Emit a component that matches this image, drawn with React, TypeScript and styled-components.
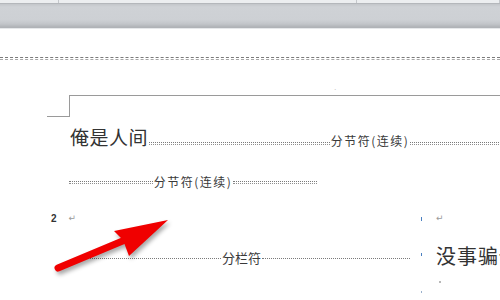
import * as React from 'react';
import styled, { createGlobalStyle } from 'styled-components';

const GlobalStyle = createGlobalStyle`
  html, body {
    margin: 0;
    padding: 0;
    background: #ffffff;
  }
  body {
    width: 500px;
    height: 300px;
    overflow: hidden;
    font-family: "Noto Sans CJK SC", "Liberation Sans", sans-serif;
  }
`;

const Screen = styled.div`
  position: relative;
  width: 500px;
  height: 300px;
  overflow: hidden;
  background: #ffffff;
`;

const TopStrip = styled.div`
  display: flex;
  height: 3px;
  background: #eceef0;
  border-bottom: 1px solid #b4b7bb;
`;

const StripCell = styled.div<{ width?: number }>`
  flex: ${p => (p.width ? `0 0 ${p.width}px` : '1')};
  border-right: 1px solid #c4c7cb;
`;

const Ribbon = styled.div`
  height: 24px;
  background: linear-gradient(
    180deg,
    #c3c6ca 0px,
    #cfd2d6 3px,
    #cdd0d4 16px,
    #c2c5c9 20px,
    #b0b3b7 23px
  );
  border-bottom: 1px solid #e6e8ea;
`;

const Page = styled.div`
  display: flex;
  flex-direction: column;
`;

const HeaderRule = styled.div`
  margin-top: 28px;
  height: 1px;
  border-top: 1px dashed #7a7a7a;
  border-bottom: 1px dashed #a8a8a8;
`;

const CornerRow = styled.div`
  display: flex;
  margin-top: 35px;
  margin-left: 47px;
  height: 22px;
`;

const CornerStub = styled.div`
  flex: 0 0 22px;
  border-bottom: 1px solid #9a9a9a;
`;

const CornerEdge = styled.div`
  flex: 1;
  border-top: 1px solid #9a9a9a;
  border-left: 1px solid #9a9a9a;
  position: relative;
`;

const Tick = styled.span`
  position: absolute;
  left: 264px;
  top: -8px;
  font-size: 7px;
  color: #a0a0a0;
  font-family: "Liberation Sans", sans-serif;
`;

const BreakLine = styled.div<{ indent: number; top: number; end: number; bottom?: boolean }>`
  display: flex;
  align-items: ${p => (p.bottom ? 'flex-end' : 'center')};
  flex: none;
  margin-top: ${p => p.top}px;
  padding-left: ${p => p.indent}px;
  width: ${p => p.end - p.indent}px;
  white-space: nowrap;
`;

const BigText = styled.span`
  font-size: 19px;
  line-height: 24px;
  color: #333333;
  letter-spacing: 0.5px;
`;

const Fill = styled.span<{ single?: boolean; lift?: number }>`
  flex: 1;
  height: ${p => (p.single ? '0' : '1px')};
  border-top: 1px dotted #7a7a7a;
  border-bottom: ${p => (p.single ? 'none' : '1px dotted #8f8f8f')};
  margin: 0 1px ${p => p.lift || 0}px;
  align-self: ${p => (p.lift ? 'flex-end' : 'center')};
`;

const BreakLabel = styled.span<{ size?: number; spacing?: number }>`
  font-size: ${p => p.size || 12}px;
  letter-spacing: ${p => p.spacing ?? 1.5}px;
  line-height: 16px;
  color: #3a3a3a;
`;

const Columns = styled.div`
  display: grid;
  grid-template-columns: 420px 14px 1fr;
  margin-top: 21px;
`;

const LeftCol = styled.div`
  display: flex;
  flex-direction: column;
  padding-left: 51px;
  padding-right: 9px;
`;

const MarkRow = styled.div`
  display: flex;
  align-items: center;
  gap: 12px;
  height: 14px;
`;

const LineNum = styled.span`
  font-family: "Liberation Sans", sans-serif;
  font-size: 10px;
  font-weight: bold;
  color: #333;
`;

const Return = styled.span`
  font-family: "DejaVu Sans", sans-serif;
  font-size: 9px;
  color: #9a9a9a;
`;

const ColBreak = styled.div`
  display: flex;
  align-items: center;
  margin-top: 22px;
  padding-left: 21px;
  height: 22px;
`;

const Divider = styled.div`
  display: flex;
  flex-direction: column;
  align-items: flex-start;
`;

const BlueMark = styled.span<{ top: number; h: number; color?: string }>`
  display: block;
  width: 1px;
  margin-left: 1px;
  margin-top: ${p => p.top}px;
  height: ${p => p.h}px;
  background: ${p => p.color || '#4a7fc0'};
`;

const RightCol = styled.div`
  display: flex;
  flex-direction: column;
  padding-left: 2px;
  overflow: hidden;
  white-space: nowrap;
`;

const RightBody = styled.span`
  margin-top: 18px;
  font-size: 20px;
  line-height: 26px;
  color: #333333;
  letter-spacing: 1px;
`;

const Dot = styled.span`
  margin-top: 12px;
  margin-left: 3px;
  width: 2px;
  height: 2px;
  background: #b8b8b8;
`;

const ArrowLayer = styled.svg`
  position: absolute;
  left: 0;
  top: 0;
  width: 500px;
  height: 300px;
  pointer-events: none;
  filter: drop-shadow(2px 3px 2px rgba(0, 0, 0, 0.35));
`;

function RedArrow() {
  return (
    <ArrowLayer viewBox="0 0 500 300">
      <line
        x1="58"
        y1="268"
        x2="125"
        y2="240"
        stroke="#f00000"
        strokeWidth="7"
        strokeLinecap="round"
      />
      <polygon points="168,220 114,231 123,240 129,256" fill="#f00000" />
    </ArrowLayer>
  );
}

export default function App() {
  return (
    <Screen>
      <GlobalStyle />
      <TopStrip>
        <StripCell width={58} />
        <StripCell width={297} />
        <StripCell />
      </TopStrip>
      <Ribbon />
      <Page>
        <HeaderRule />
        <CornerRow>
          <CornerStub />
          <CornerEdge>
            <Tick>ˊ</Tick>
          </CornerEdge>
        </CornerRow>
        <BreakLine indent={70} top={8} end={592} bottom>
          <BigText>俺是人间</BigText>
          <Fill lift={4} />
          <BreakLabel>分节符(连续)</BreakLabel>
          <Fill lift={4} />
        </BreakLine>
        <BreakLine indent={68} top={25} end={318}>
          <Fill />
          <BreakLabel>分节符(连续)</BreakLabel>
          <Fill />
        </BreakLine>
        <Columns>
          <LeftCol>
            <MarkRow>
              <LineNum>2</LineNum>
              <Return>↵</Return>
            </MarkRow>
            <ColBreak>
              <Fill single />
              <BreakLabel size={13} spacing={0}>分栏符</BreakLabel>
              <Fill single />
            </ColBreak>
          </LeftCol>
          <Divider>
            <BlueMark top={6} h={4} />
            <BlueMark top={32} h={3} />
            <BlueMark top={35} h={2} color="#9ab0cc" />
          </Divider>
          <RightCol>
            <MarkRow>
              <Return>↵</Return>
            </MarkRow>
            <RightBody>没事骗他</RightBody>
            <Dot />
          </RightCol>
        </Columns>
      </Page>
      <RedArrow />
    </Screen>
  );
}
